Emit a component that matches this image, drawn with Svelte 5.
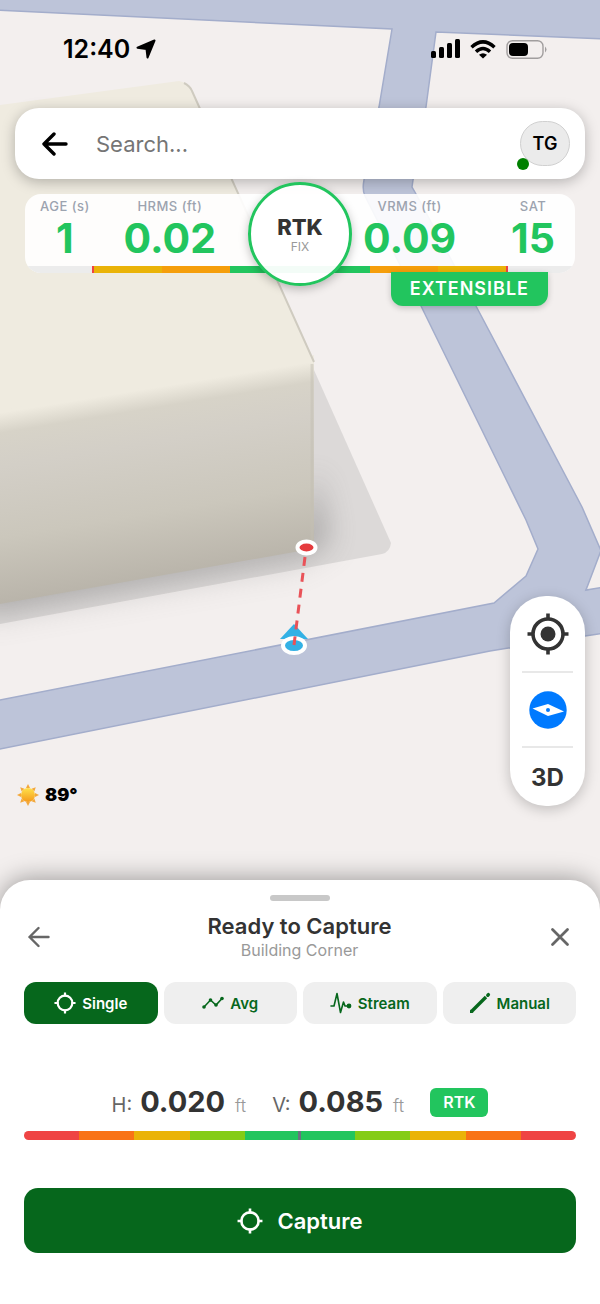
<script>
  let search = $state('');
  let mode = $state('Single');

  const modes = ['Single', 'Avg', 'Stream', 'Manual'];

  const left = [
    { label: 'AGE (s)', value: '1' },
    { label: 'HRMS (ft)', value: '0.02' }
  ];
  const right = [
    { label: 'VRMS (ft)', value: '0.09' },
    { label: 'SAT', value: '15' }
  ];

  const range = [
    { color: '#ececec', size: 67 },
    { color: '#ef4444', size: 2 },
    { color: '#eab308', size: 68 },
    { color: '#f59e0b', size: 68 },
    { color: '#22c55e', size: 140 },
    { color: '#f59e0b', size: 68 },
    { color: '#eab308', size: 68 },
    { color: '#ef4444', size: 2 },
    { color: '#ececec', size: 67 }
  ];

  const half = ['#ef4444', '#f97316', '#eab308', '#84cc16', '#22c55e'];
  const scale = [...half, ...half.slice().reverse()];

  const rays = [0, 45, 90, 135, 180, 225, 270, 315];
</script>

{#snippet crosshair()}
  <svg class="icon" viewBox="0 0 24 24" fill="none" stroke="currentColor" stroke-width="2.4">
    <circle cx="12" cy="12" r="8" />
    <path d="M12 0.5V5M12 19v4.5M0.5 12H5M19 12h4.5" />
  </svg>
{/snippet}

{#snippet metric(item)}
  <div class="metric">
    <span class="metric-label">{item.label}</span>
    <span class="metric-value">{item.value}</span>
  </div>
{/snippet}

<div class="screen">
  <svg class="map" viewBox="0 0 600 920" preserveAspectRatio="xMidYMin slice" aria-hidden="true">
    <defs>
      <linearGradient id="wall" gradientUnits="userSpaceOnUse" x1="140" y1="384" x2="172" y2="580">
        <stop offset="0" stop-color="#efebe0" />
        <stop offset="0.03" stop-color="#efebe0" />
        <stop offset="0.13" stop-color="#d7d3c8" />
        <stop offset="0.3" stop-color="#d3cfc7" />
        <stop offset="0.65" stop-color="#cbc7bc" />
        <stop offset="1" stop-color="#b8b3a9" />
      </linearGradient>
      <filter id="soft" x="-20%" y="-20%" width="140%" height="140%">
        <feGaussianBlur stdDeviation="14" />
      </filter>
      <clipPath id="cast"><path d="M314 370L391 543Q389 552 382 554L0 624V300z" /></clipPath>
    </defs>
    <rect width="600" height="920" fill="#f3efee" />
    <path
      class="road"
      d="M-5 -5H605V39L436 32L426 107L413 180L412 187L416 194L476 306L582 507L605 560V585L586 590L605 548V633L585 636L490 651L-5 750V701L494 603L526 576L538 549L526 520L421 306L365 196Q362 190 364 180L379 107L392 29L-5 10z"
    />
    <path class="land" d="M605 540L586 590L605 587z" />
    <path d="M-20 590L314 535L330 470L335 545L300 566L-20 622z" fill="#777" opacity="0.25" filter="url(#soft)" />
    <path d="M314 370L391 543Q390 552 382 554L0 624V560z" fill="#dcd9d8" />
    <g clip-path="url(#cast)">
      <path d="M-20 580L300 530L316 470L330 540L310 556L-20 616z" fill="#666" opacity="0.4" filter="url(#soft)" />
    </g>
    <path d="M0 406L314 355V548L300 551L0 604z" fill="url(#wall)" />
    <path d="M312 364V548" stroke="#c4c0b4" stroke-width="3" opacity="0.5" />
    <path d="M0 105L179 81Q189 83 191 89L314 362L0 410z" fill="#efebe0" />
    <path d="M184 83Q190 86 192 91L314 362" fill="none" stroke="#cfcbc0" stroke-width="2" />
    <path d="M280 639L294 624L308 639z" fill="#33b1e5" />
    <ellipse cx="294" cy="645.500" rx="11" ry="7.500" fill="#33b1e5" stroke="#fff" stroke-width="4" />
    <path d="M305 557L294 645" stroke="#e95258" stroke-width="3" stroke-dasharray="9 7" />
    <ellipse cx="306.500" cy="547.500" rx="9" ry="6" fill="#e53b3e" stroke="#fff" stroke-width="4" />
  </svg>

  <header class="status">
    <div class="clock">
      <span>12:40</span>
      <svg width="20" height="20" viewBox="0 0 20 20" stroke="#000" stroke-width="2" stroke-linejoin="round"><path d="M18.500 1.500L11.500 18.500L10.500 10L1.500 8.700z" /></svg>
    </div>
    <div class="signals">
      <svg width="29" height="20" viewBox="0 0 29 20">
        <rect x="0" y="12" width="5" height="7" rx="1.500" />
        <rect x="8" y="8" width="5" height="11" rx="1.500" />
        <rect x="16" y="4" width="5" height="15" rx="1.500" />
        <rect x="24" y="0" width="5" height="19" rx="1.500" />
      </svg>
      <svg width="26" height="19" viewBox="0 0 26 19" fill="none" stroke="#000" stroke-width="3.500">
        <path d="M1.500 7.200Q13 -3.300 24.500 7.200" />
        <path d="M6 11.700Q13 5.300 20 11.700" />
        <path d="M9 14.800Q13 11.500 17 14.800L13 18.500z" fill="#000" stroke="none" />
      </svg>
      <svg width="41" height="19" viewBox="0 0 41 19">
        <rect x="1" y="0.700" width="36" height="17.600" rx="5.500" fill="none" stroke="#a19e9e" stroke-width="1.400" />
        <rect x="3" y="3" width="19" height="13" rx="4" />
        <path d="M39 6.500q3 3 0 6z" fill="#a19e9e" />
      </svg>
    </div>
  </header>

  <form class="search" onsubmit={(e) => e.preventDefault()}>
    <button class="plain" type="button" aria-label="Back">
      <svg width="26" height="26" viewBox="0 0 26 26" fill="none" stroke="#000" stroke-width="3.400" stroke-linecap="round" stroke-linejoin="round">
        <path d="M24 13H2M12 3L2 13L12 23" />
      </svg>
    </button>
    <input type="text" placeholder="Search..." aria-label="Search" bind:value={search} />
    <button class="avatar" type="button">TG<span class="online"></span></button>
  </form>

  <section class="gnss">
    <div class="panel">
      <div class="metrics">
        <div class="group group-left">
          {#each left as item}{@render metric(item)}{/each}
        </div>
        <div class="group group-right">
          {#each right as item}{@render metric(item)}{/each}
        </div>
      </div>
      <div class="range">
        {#each range as part}
          <span style="flex-grow: {part.size}; background: {part.color}"></span>
        {/each}
      </div>
    </div>
    <button class="ring" type="button">
      <strong>RTK</strong>
      <small>FIX</small>
    </button>
    <div class="extensible">EXTENSIBLE</div>
  </section>

  <div class="overlay">
    <div class="weather">
      <svg width="22" height="22" viewBox="0 0 22 22">
        <defs>
          <linearGradient id="sun" x1="0" y1="0" x2="0" y2="1">
            <stop offset="0" stop-color="#ffe14a" />
            <stop offset="1" stop-color="#f59a1c" />
          </linearGradient>
        </defs>
        {#each rays as angle}
          <path d="M9 4L11 0L13 4z" fill="#f3a83b" transform="rotate({angle} 11 11)" />
        {/each}
        <circle cx="11" cy="11" r="7" fill="url(#sun)" />
      </svg>
      <span>89°</span>
    </div>
    <div class="controls">
      <button type="button" aria-label="My location">
        <svg width="42" height="42" viewBox="0 0 42 42" fill="none" stroke="#333" stroke-width="3.600">
          <circle cx="21" cy="21" r="15" />
          <circle cx="21" cy="21" r="7.500" fill="#333" stroke="none" />
          <path d="M21 0.500V6M21 36v5.500M0.500 21H6M36 21h5.500" />
        </svg>
      </button>
      <button type="button" aria-label="Compass">
        <svg width="38" height="38" viewBox="0 0 38 38">
          <circle cx="19" cy="19" r="18.700" fill="#007aff" />
          <path d="M3.500 17.500L19 13L35 20.500L19 25z" fill="#fff" />
          <circle cx="19" cy="19" r="2" fill="#007aff" />
        </svg>
      </button>
      <button class="view" type="button">3D</button>
    </div>
  </div>

  <section class="sheet">
    <div class="handle"></div>
    <div class="sheet-head">
      <button class="plain" type="button" aria-label="Previous">
        <svg width="22" height="22" viewBox="0 0 22 22" fill="none" stroke="#666" stroke-width="2.400" stroke-linecap="round" stroke-linejoin="round">
          <path d="M20.500 11H1.500M10.500 2L1.500 11L10.500 20" />
        </svg>
      </button>
      <div class="titles">
        <h1>Ready to Capture</h1>
        <p>Building Corner</p>
      </div>
      <button class="plain" type="button" aria-label="Close">
        <svg width="22" height="22" viewBox="0 0 22 22" fill="none" stroke="#666" stroke-width="2.800" stroke-linecap="round">
          <path d="M3.500 3.500L18.500 18.500M18.500 3.500L3.500 18.500" />
        </svg>
      </button>
    </div>

    <div class="modes">
      {#each modes as name}
        <button type="button" class:active={mode === name} onclick={() => (mode = name)}>
          {#if name === 'Single'}
            {@render crosshair()}
          {:else if name === 'Avg'}
            <svg class="icon" viewBox="0 0 22 22" fill="currentColor">
              <path d="M2 15L8.500 8L14 13L20 6.500" fill="none" stroke="currentColor" stroke-width="1.600" />
              <circle cx="2" cy="15" r="1.800" />
              <circle cx="8.500" cy="8" r="1.800" />
              <circle cx="14" cy="13" r="1.800" />
              <circle cx="20" cy="6.500" r="1.800" />
            </svg>
          {:else if name === 'Stream'}
            <svg class="icon" viewBox="0 0 22 22" fill="none" stroke="currentColor" stroke-width="1.600" stroke-linejoin="round" stroke-linecap="round">
              <path d="M1 14H4L7 1.500L10.500 20.500L13.500 10L15 14H18" />
              <circle cx="19" cy="14" r="1.600" fill="currentColor" />
            </svg>
          {:else}
            <svg class="icon" viewBox="0 0 22 22" fill="none" stroke="currentColor" stroke-width="3.400">
              <path d="M2.500 19.500L17 5" />
              <path d="M1 17.500V21H4.500z" fill="currentColor" stroke="none" />
              <path d="M18.800 3.200L19.400 2.600" stroke-linecap="round" />
            </svg>
          {/if}
          {name}
        </button>
      {/each}
    </div>

    <div class="accuracy">
      <div class="reading"><span>H:</span><b>0.020</b><i>ft</i></div>
      <div class="reading"><span>V:</span><b>0.085</b><i>ft</i></div>
      <span class="fix">RTK</span>
    </div>
    <div class="scale">
      {#each scale as color}
        <span style="background: {color}"></span>
      {/each}
      <span class="marker"></span>
    </div>

    <button class="capture" type="button">{@render crosshair()}Capture</button>
  </section>
</div>

<style>
:global(body) {
  margin: 0;
  background: #f3efee;
}
.screen {
  position: relative;
  display: flex;
  flex-direction: column;
  min-height: 100vh;
  overflow: hidden;
  font-family: Inter, "Liberation Sans", sans-serif;
  color: #333;
}
.screen * {
  box-sizing: border-box;
}
.screen > :not(.map) {
  position: relative;
}
svg {
  display: block;
  flex: none;
}
button {
  font: inherit;
  color: inherit;
  border: 0;
  padding: 0;
  background: none;
  cursor: pointer;
}
.map {
  position: absolute;
  top: 0;
  left: 0;
  width: 100%;
  height: 920px;
}
.road {
  fill: #bdc4d9;
  stroke: #a3adcb;
  stroke-width: 1.5;
}
.land {
  fill: #f3efee;
  stroke: #a3adcb;
  stroke-width: 1.5;
}

.status {
  display: flex;
  justify-content: space-between;
  align-items: center;
  height: 108px;
  padding: 0 53px 10px 63px;
  color: #000;
}
.clock {
  display: flex;
  align-items: center;
  gap: 6px;
  font-size: 25px;
  line-height: 30px;
  font-weight: 600;
}
.signals {
  display: flex;
  align-items: center;
  gap: 10px;
}

.search {
  display: flex;
  align-items: center;
  height: 71px;
  margin: 0 15px;
  padding: 0 15px 0 27px;
  border-radius: 24px;
  background: #fff;
  box-shadow: 0 3px 14px rgba(0, 0, 0, 0.26);
}
.search input {
  flex: 1;
  min-width: 0;
  margin: 0 16px 0 28px;
  padding: 0;
  border: 0;
  outline: 0;
  background: none;
  font: inherit;
  font-size: 22px;
  color: #333;
}
.search input::placeholder {
  color: #757575;
  opacity: 1;
}
.avatar {
  position: relative;
  width: 50px;
  height: 45px;
  border: 1px solid #d0d0d0;
  border-radius: 24px;
  background: #ebebeb;
  color: #000;
  font-size: 18px;
  font-weight: 600;
}
.online {
  position: absolute;
  left: -4px;
  bottom: -5px;
  width: 12px;
  height: 12px;
  border-radius: 50%;
  background: #008000;
}

.gnss {
  display: flex;
  flex-direction: column;
  margin: 15px 25px 0;
}
.panel {
  border-radius: 16px;
  overflow: hidden;
  background: rgba(255, 255, 255, 0.9);
}
.metrics {
  display: grid;
  grid-template-columns: 1fr 1fr;
  column-gap: 104px;
  height: 72px;
}
.group {
  display: flex;
  justify-content: space-between;
}
.group-left {
  padding: 0 32px 0 15px;
}
.group-right {
  padding: 0 20px 0 11px;
}
.metric {
  display: flex;
  flex-direction: column;
  align-items: center;
  padding-top: 4px;
}
.metric-label {
  font-size: 13px;
  line-height: 16px;
  font-weight: 500;
  letter-spacing: 0.5px;
  color: #9ca3af;
  white-space: nowrap;
}
.metric-value {
  font-size: 41px;
  line-height: 48px;
  font-weight: 700;
  color: #22c55e;
}
.range {
  display: flex;
  height: 7px;
}
.range span {
  flex-basis: 0;
}
.ring {
  position: absolute;
  left: 50%;
  top: -12px;
  display: flex;
  flex-direction: column;
  align-items: center;
  justify-content: center;
  width: 104px;
  height: 104px;
  margin-left: -52px;
  border: 3px solid #22c55e;
  border-radius: 50%;
  background: rgba(255, 255, 255, 0.95);
  box-shadow: 0 3px 10px rgba(0, 0, 0, 0.25);
}
.ring strong {
  font-size: 22px;
  line-height: 26px;
  font-weight: 800;
}
.ring small {
  font-size: 12px;
  line-height: 14px;
  color: #999;
}
.extensible {
  align-self: flex-end;
  margin: -1px 27px 0 0;
  padding: 0 19px;
  border-radius: 0 0 12px 12px;
  background: #22c55e;
  box-shadow: 0 2px 6px rgba(0, 0, 0, 0.2);
  color: #fff;
  font-size: 18px;
  line-height: 34px;
  font-weight: 600;
  letter-spacing: 1px;
}

.overlay {
  flex: 1;
  display: flex;
  justify-content: space-between;
  align-items: flex-end;
  padding: 40px 15px 74px 17px;
}
.weather {
  display: flex;
  align-items: center;
  gap: 6px;
  color: #000;
  font-size: 18px;
  line-height: 20px;
  font-weight: 900;
}
.controls {
  display: flex;
  flex-direction: column;
  width: 75px;
  border-radius: 36px;
  background: #fff;
  box-shadow: 0 3px 14px rgba(0, 0, 0, 0.22);
}
.controls button {
  display: flex;
  align-items: center;
  justify-content: center;
  height: 75px;
  margin: 0 12px;
}
.controls button + button {
  border-top: 2px solid #e8e8e8;
}
.controls .view {
  height: 60px;
  font-size: 24px;
  font-weight: 700;
}

.sheet {
  display: flex;
  flex-direction: column;
  padding: 15px 24px 51px;
  border-radius: 30px 30px 0 0;
  background: #fff;
  box-shadow: 0 -2px 24px rgba(0, 0, 0, 0.35);
}
.handle {
  align-self: center;
  width: 60px;
  height: 6px;
  border-radius: 3px;
  background: #c8c8c8;
}
.sheet-head {
  display: flex;
  align-items: center;
  justify-content: space-between;
  padding: 11px 5px 21px 4px;
}
.titles {
  text-align: center;
}
h1 {
  margin: 0;
  font-size: 22px;
  line-height: 28px;
  font-weight: 600;
}
p {
  margin: 0;
  font-size: 16px;
  line-height: 21px;
  color: #999;
}
.modes {
  display: grid;
  grid-template-columns: repeat(4, 1fr);
  gap: 6px;
}
.modes button {
  display: flex;
  align-items: center;
  justify-content: center;
  gap: 6px;
  height: 42px;
  border-radius: 12px;
  background: #efefef;
  color: #06671c;
  font-size: 15px;
  font-weight: 600;
}
.modes .active {
  background: #06671c;
  color: #fff;
}
.icon {
  width: 22px;
  height: 22px;
}
.accuracy {
  display: flex;
  align-items: center;
  justify-content: center;
  gap: 26px;
  margin-top: 60px;
}
.reading {
  display: flex;
  align-items: baseline;
  line-height: 20px;
}
.reading span {
  font-size: 20px;
  color: #666;
}
.reading b {
  margin: 0 10px 0 8px;
  font-size: 29px;
  line-height: 36px;
  font-weight: 700;
}
.reading i {
  font-size: 18px;
  font-style: normal;
  font-weight: 300;
  color: #999;
}
.fix {
  padding: 0 13px;
  border-radius: 6px;
  background: #22c55e;
  color: #fff;
  font-size: 16px;
  line-height: 29px;
  font-weight: 600;
}
.scale {
  position: relative;
  display: flex;
  height: 9px;
  margin-top: 11px;
  border-radius: 5px;
  overflow: hidden;
}
.scale span {
  flex: 1;
}
.scale .marker {
  position: absolute;
  left: 50%;
  width: 3px;
  height: 100%;
  margin-left: -2px;
  background: #6b7280;
}
.capture {
  display: flex;
  align-items: center;
  justify-content: center;
  gap: 14px;
  height: 65px;
  margin-top: 48px;
  border-radius: 14px;
  background: #06671c;
  color: #fff;
  font-size: 22px;
  font-weight: 600;
}
.capture .icon {
  width: 26px;
  height: 26px;
}
</style>
